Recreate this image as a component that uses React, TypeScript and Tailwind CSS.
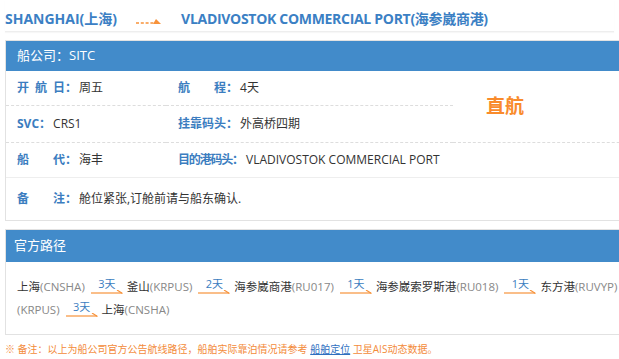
import React from 'react';

const font = { fontFamily: '"Open Sans", "Noto Sans CJK SC", sans-serif' };

function Spread({ text }: { text: string }) {
  return (
    <span className="flex w-[48px] justify-between">
      {text.split('').map((c, i) => (
        <span key={i}>{c}</span>
      ))}
    </span>
  );
}

function Field({ label, value, spread = true, tight = false }: { label: string; value: string; spread?: boolean; tight?: boolean }) {
  return (
    <div className="flex items-center h-full">
      <span className="flex items-center font-bold text-[#3b7dc0]">
        {spread ? (
          tight ? <span className="whitespace-nowrap tracking-[-1.2px]">{label}</span> : <Spread text={label} />
        ) : (
          <span>{label}</span>
        )}
        <span>：</span>
      </span>
      <span className="ml-[2px] text-[#333]">{value}</span>
    </div>
  );
}

function Arrow({ days }: { days: string }) {
  return (
    <span className="ml-[6px] mr-[4px] inline-flex flex-col items-center">
      <span className="text-[11px] leading-[12px] text-[#3b7dc0]">{days}</span>
      <svg width="32" height="6" viewBox="0 0 32 6">
        <line x1="0" y1="3" x2="31" y2="3" stroke="#f7923a" strokeWidth="1.2" />
        <line x1="26" y1="0" x2="31.5" y2="3.5" stroke="#f7923a" strokeWidth="1.2" />
      </svg>
    </span>
  );
}

function Port({ name, code }: { name?: string; code: string }) {
  return (
    <span className="whitespace-nowrap">
      {name && <span className="text-[#333]">{name}</span>}
      <span className="text-[#888]">({code})</span>
    </span>
  );
}

export default function App() {
  return (
    <div className="w-[619px] h-[359px] overflow-hidden bg-white px-[5px] text-[12px]" style={font}>
      {/* route title */}
      <div className="flex items-center h-[32px] pt-[5px] border-b border-[#eee] text-[14px] font-bold text-[#3b80c4] shadow-[0_1px_1px_rgba(0,0,0,0.03)]">
        <span>SHANGHAI(上海)</span>
        <svg className="ml-[19px] mt-[4px]" width="26" height="9" viewBox="0 0 26 9">
          <line x1="0" y1="7" x2="18" y2="7" stroke="#f7923a" strokeWidth="1.6" strokeDasharray="3 1.8" />
          <polygon points="17,8 25,8 20,3" fill="#f7923a" />
        </svg>
        <span className="ml-[19px] whitespace-nowrap tracking-[-0.3px]">VLADIVOSTOK COMMERCIAL PORT(海参崴商港)</span>
      </div>

      {/* ship info */}
      <div className="mt-[8px] w-[700px] border border-[#e2e2e2]">
        <div className="flex items-center h-[30px] bg-[#428bca] pl-[11px] text-[13px] text-white">船公司：SITC</div>
        <div className="grid grid-cols-[160px_287px_1fr]">
          <div className="h-[35px] pl-[11px] border-b border-dashed border-[#ddd]">
            <Field label="开航日" value="周五" />
          </div>
          <div className="h-[35px] pl-[12px] border-b border-dashed border-[#ddd]">
            <Field label="航程" value="4天" />
          </div>
          <div className="row-span-2 flex items-center pl-[33px] border-b border-dashed border-[#ddd] text-[19px] font-bold text-[#f98b2c]">
            直航
          </div>
          <div className="h-[37px] pl-[11px] border-b border-dashed border-[#ddd]">
            <Field label="SVC" value="CRS1" spread={false} />
          </div>
          <div className="h-[37px] pl-[12px] border-b border-dashed border-[#ddd]">
            <Field label="挂靠码头" value="外高桥四期" />
          </div>
          <div className="h-[35px] pl-[11px] border-b border-[#eee]">
            <Field label="船代" value="海丰" />
          </div>
          <div className="col-span-2 h-[35px] pl-[12px] border-b border-[#eee]">
            <Field label="目的港码头" value="VLADIVOSTOK COMMERCIAL PORT" tight />
          </div>
          <div className="col-span-3 h-[42px] pl-[11px]">
            <Field label="备注" value="舱位紧张,订舱前请与船东确认." />
          </div>
        </div>
      </div>

      {/* official route */}
      <div className="mt-[8px] w-[700px] border border-[#e2e2e2]">
        <div className="flex items-center h-[32px] bg-[#428bca] pl-[8px] text-[13px] text-white">官方路径</div>
        <div className="flex flex-col gap-[5px] pt-[16px] pb-[15px] pl-[11px] text-[11.5px]">
          <div className="flex items-center h-[18px] whitespace-nowrap">
            <Port name="上海" code="CNSHA" />
            <Arrow days="3天" />
            <Port name="釜山" code="KRPUS" />
            <Arrow days="2天" />
            <Port name="海参崴商港" code="RU017" />
            <Arrow days="1天" />
            <Port name="海参崴索罗斯港" code="RU018" />
            <Arrow days="1天" />
            <Port name="东方港" code="RUVYP" />
          </div>
          <div className="flex items-center h-[18px] whitespace-nowrap">
            <Port code="KRPUS" />
            <Arrow days="3天" />
            <Port name="上海" code="CNSHA" />
          </div>
        </div>
      </div>

      {/* note */}
      <div className="mt-[7px] whitespace-nowrap text-[10px] text-[#f38b3a]">
        ※ 备注：以上为船公司官方公告航线路径，船舶实际靠泊情况请参考 <span className="text-[#2f6fbf] underline">船舶定位</span> 卫星AIS动态数据。
      </div>
    </div>
  );
}
